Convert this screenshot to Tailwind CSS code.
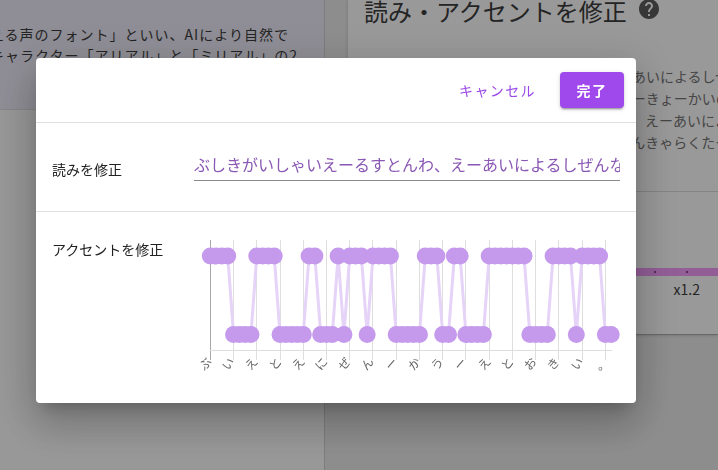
<!DOCTYPE html>
<html lang="ja">
<head>
    <meta charset="UTF-8">
    <meta name="viewport" content="width=device-width, initial-scale=1.0">
    <title>読み・アクセントを修正</title>
    <script src="https://cdn.jsdelivr.net/npm/@tailwindcss/browser@4"></script>
</head>
<body class="h-screen overflow-hidden bg-[#ececec] font-['Noto_Sans_CJK_JP','Noto_Sans',sans-serif] text-sm text-[#212121]">
    <div class="flex h-full text-[#3c3c3c]">
        <section class="w-[325px] shrink-0 overflow-hidden border-r border-[#d0d0d0] bg-[#fdfdfd]">
            <div class="h-[110px] border-b border-[#e0e0e0] bg-[#efedfa] pt-6">
                <p class="-ml-[10px] whitespace-nowrap leading-[21px] tracking-[1px]">える声のフォント」といい、AIにより自然で<br>キャラクター「アリアル」と「ミリアル」の2</p>
            </div>
        </section>

        <main class="min-w-0 flex-1 overflow-hidden pl-[22px]">
            <div class="border-b border-l border-[#b0b0b0] border-l-[#dcdcdc] bg-white shadow">
                <div class="flex h-[22px] items-center gap-[10px] pl-4">
                    <h1 class="whitespace-nowrap text-2xl leading-6">読み・アクセントを修正</h1>
                    <svg class="-mt-1 size-6 shrink-0 fill-[#5c5c5c]" viewBox="0 0 24 24"><path d="M12 2C6.48 2 2 6.48 2 12s4.48 10 10 10 10-4.48 10-10S17.52 2 12 2zm1 17h-2v-2h2v2zm2.07-7.75l-.9.92C13.45 12.9 13 13.5 13 15h-2v-.5c0-1.1.45-2.1 1.17-2.83l1.24-1.26c.37-.36.59-.86.59-1.41 0-1.1-.9-2-2-2s-2 .9-2 2H8c0-2.21 1.79-4 4-4s4 1.79 4 4c0 .88-.36 1.68-.93 2.25z"/></svg>
                </div>
                <p class="h-[170px] whitespace-nowrap border-b border-[#dcdcdc] pl-8 pt-[43px] leading-[22px] text-[#757575]">ぶしきがいしゃいえーるすとんわ、えーあいによるしぜん<br>なおんせいをつくるぎじゅつのかいはつーきょーかいの<br>こえのふぉんととよばれるさーびすです、えーあいにより<br>しぜんなこえではなすふたりのおりじなんきゃらくたー</p>
                <div class="pt-[76px] pb-9">
                    <div class="flex h-2 items-center justify-end gap-[30px] bg-[#f59cfb] pr-[30px]">
                        <span class="size-[2px] rounded-full bg-[#6a2a78]"></span>
                        <span class="size-[2px] rounded-full bg-[#6a2a78]"></span>
                    </div>
                    <div class="flex justify-end pt-1 pr-[18px] leading-[18px]">x1.2</div>
                </div>
            </div>
        </main>
    </div>

    <div class="fixed inset-0 bg-black/40 px-9 pt-[58px]">
        <div role="dialog" aria-modal="true" aria-label="読み・アクセントを修正" class="w-[600px] rounded bg-white shadow-[0_11px_15px_-7px_rgba(0,0,0,0.2),0_24px_38px_3px_rgba(0,0,0,0.14),0_9px_46px_8px_rgba(0,0,0,0.12)]">
            <div class="flex items-center justify-end gap-2 border-b border-[#e0e0e0] px-3 py-[14px]">
                <button type="button" class="h-9 px-4 tracking-widest text-[#9c48e8]">キャンセル</button>
                <button type="button" class="h-9 w-16 rounded bg-[#9f49ec] font-bold tracking-widest text-white shadow-[0_3px_1px_-2px_rgba(0,0,0,0.2),0_2px_2px_0_rgba(0,0,0,0.14),0_1px_5px_0_rgba(0,0,0,0.12)]">完了</button>
            </div>
            <div class="flex items-center border-b border-[#e0e0e0] px-4 pt-[26px] pb-[30px]">
                <label for="reading" class="w-[142px] shrink-0 pt-2">読みを修正</label>
                <input id="reading" type="text" value="ぶしきがいしゃいえーるすとんわ、えーあいによるしぜんなおんせい" class="h-8 min-w-0 flex-1 border-b border-[#8a8a8a] pb-[2px] text-base text-[#8a58b5] outline-none">
            </div>
            <div class="flex px-4 pt-7 pb-6">
                <h2 class="w-[142px] shrink-0 leading-[18px]">アクセントを修正</h2>
                <svg id="accent-chart" class="min-w-0 flex-1 overflow-visible" viewBox="0 0 426 139" role="img" aria-label="アクセント"></svg>
            </div>
        </div>
    </div>

    <script>
        // H = high pitch, L = low pitch, one letter per mora
        const accents = 'HHHHLLLLHHHHLLLLLHHLLLHLHHHLHHHHLLLLLHHHLLHHLLLLHHHHHHHLLLLHHHHLHHHHLL';
        const labels = 'ぶいえとえにぜんーかうーえとおきい。';
        const left = 16.3, step = 5.81, high = 16, low = 94.5, axis = 110.5;

        const points = [...accents].map((a, i) => [left + i * step, a === 'H' ? high : low]);

        let html = '';
        [...labels].forEach((label, i) => {
            const x = Math.floor(left + i * 4 * step) + 0.5;
            html += `<line x1="${x}" x2="${x}" y1="0" y2="120" class="${i ? 'stroke-[#dedede]' : 'stroke-[#a8a8a8]'}"/>`;
            html += `<text transform="translate(${x - 6} 123) rotate(-50)" text-anchor="middle" dominant-baseline="central" class="fill-[#666] text-xs">${label}</text>`;
        });
        html += `<line x1="16" x2="418" y1="${axis}" y2="${axis}" class="stroke-[#dedede]"/>`;
        html += `<polyline points="${points.join(' ')}" class="fill-none stroke-[#e6d3f8] stroke-3"/>`;
        points.forEach(([x, y]) => {
            html += `<circle cx="${x}" cy="${y}" r="8.5" class="fill-[#c599ec]"/>`;
        });
        document.getElementById('accent-chart').innerHTML = html;
    </script>
</body>
</html>
